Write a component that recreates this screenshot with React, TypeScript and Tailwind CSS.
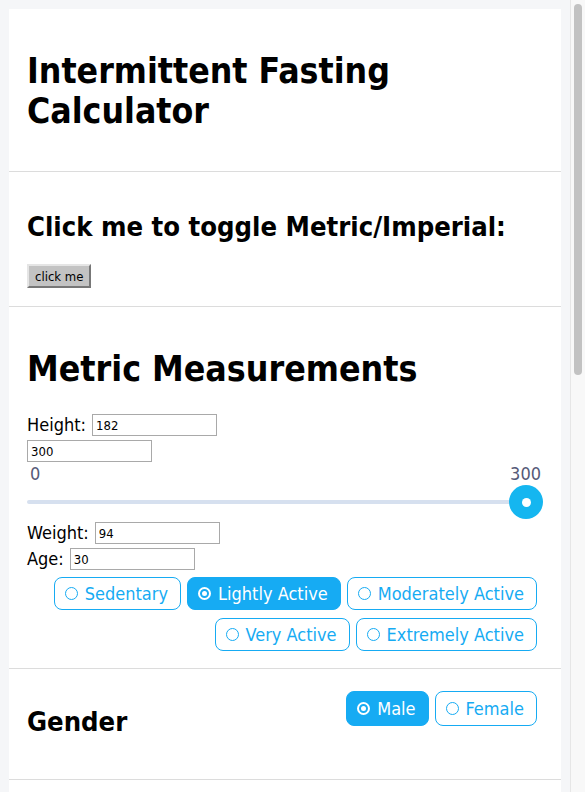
import React, { useState } from 'react';

const levels = [
  ['Sedentary', 'Lightly Active', 'Moderately Active'],
  ['Very Active', 'Extremely Active'],
];

const Pill: React.FC<{ label: string; active: boolean; tall?: boolean; onClick: () => void }> = ({
  label,
  active,
  tall,
  onClick,
}) => (
  <button
    onClick={onClick}
    className={`flex ${tall ? 'h-[35px]' : 'h-[33px]'} items-center gap-[7px] rounded-lg border border-[#16abf3] pl-[10px] pr-[12px] text-[18px] leading-none ${
      active ? 'bg-[#16abf3] text-white' : 'bg-white text-[#16abf3]'
    }`}
  >
    <span
      className={`flex h-[13px] w-[13px] items-center justify-center rounded-full ${
        active ? 'border-2 border-white' : 'border border-[#16abf3]'
      }`}
    >
      {active && <span className="h-[5px] w-[5px] rounded-full bg-white" />}
    </span>
    {label}
  </button>
);

const Field: React.FC<{ label?: string; value: string }> = ({ label, value }) => (
  <div className="flex h-[24px] items-center gap-[6px]">
    {label && <span className="text-[18px] leading-none">{label}</span>}
    <input
      defaultValue={value}
      className="h-[22px] w-[125px] border border-[#a9a9a9] px-[3px] text-[13px] outline-none"
    />
  </div>
);

export default function App() {
  const [level, setLevel] = useState('Lightly Active');
  const [gender, setGender] = useState('Male');

  return (
    <div className="flex h-screen overflow-hidden bg-[#f5f6f8] text-black [font-family:'DejaVu_Sans_Condensed','DejaVu_Sans',sans-serif]">
      <main className="flex-1 px-[9px] pt-[9px]">
        <div className="min-h-[1690px] bg-white">
          <section className="border-b border-[#dcdcdc] px-[18px] pt-[42px] pb-[40px]">
            <h1 className="text-[35.3px] font-bold leading-[40px]">Intermittent Fasting Calculator</h1>
          </section>

          <section className="border-b border-[#dcdcdc] px-[18px] pt-[39px] pb-[18px]">
            <h2 className="text-[27.2px] font-bold leading-[32px]">Click me to toggle Metric/Imperial:</h2>
            <button className="mt-[21px] h-[24px] border-2 border-t-[#e5e5e5] border-l-[#e5e5e5] border-r-[#777] border-b-[#777] bg-[#c3c3c3] px-[6px] text-[13px] leading-none">
              click me
            </button>
          </section>

          <section className="border-b border-[#dcdcdc] px-[18px] pt-[42px] pb-[17px]">
            <h2 className="mb-[24px] text-[35.4px] font-bold leading-[40px]">Metric Measurements</h2>
            <Field label="Height:" value="182" />
            <div className="mt-[2px]">
              <Field value="300" />
            </div>
            <div className="mt-[1px] flex h-[20px] items-center justify-between pl-[3px] pr-[2px] text-[18px] leading-none text-[#555a78]">
              <span>0</span>
              <span>300</span>
            </div>
            <div className="relative mt-[1px] h-[36px]">
              <div className="absolute left-0 right-0 top-[15px] h-[4px] rounded-full bg-[#d6e0ef]" />
              <div className="absolute right-0 top-0 flex h-[34px] w-[34px] items-center justify-center rounded-full bg-[#15b6f0]">
                <div className="h-[9px] w-[9px] rounded-full bg-white" />
              </div>
            </div>
            <Field label="Weight:" value="94" />
            <div className="mt-[2px]">
              <Field label="Age:" value="30" />
            </div>
            <div className="mt-[6px] flex flex-col items-end gap-[8px] pr-[6px]">
              {levels.map((row, i) => (
                <div key={i} className="flex gap-[6px]">
                  {row.map((l) => (
                    <Pill key={l} label={l} active={level === l} onClick={() => setLevel(l)} />
                  ))}
                </div>
              ))}
            </div>
          </section>

          <section className="flex justify-between border-b border-[#dcdcdc] px-[18px] pt-[22px] pb-[41px]">
            <h2 className="mt-[15px] text-[27.2px] font-bold leading-[32px]">Gender</h2>
            <div className="flex gap-[6px] pr-[6px]">
              {['Male', 'Female'].map((g) => (
                <Pill key={g} label={g} tall active={gender === g} onClick={() => setGender(g)} />
              ))}
            </div>
          </section>
        </div>
      </main>

      {/* fake classic scrollbar */}
      <aside className="w-[15px] border-l border-[#e6e6e6] bg-[#f8f8f8]">
        <div className="mx-auto mt-[4px] h-[371px] w-[8px] rounded-full bg-[#c2c2c2]" />
      </aside>
    </div>
  );
}
